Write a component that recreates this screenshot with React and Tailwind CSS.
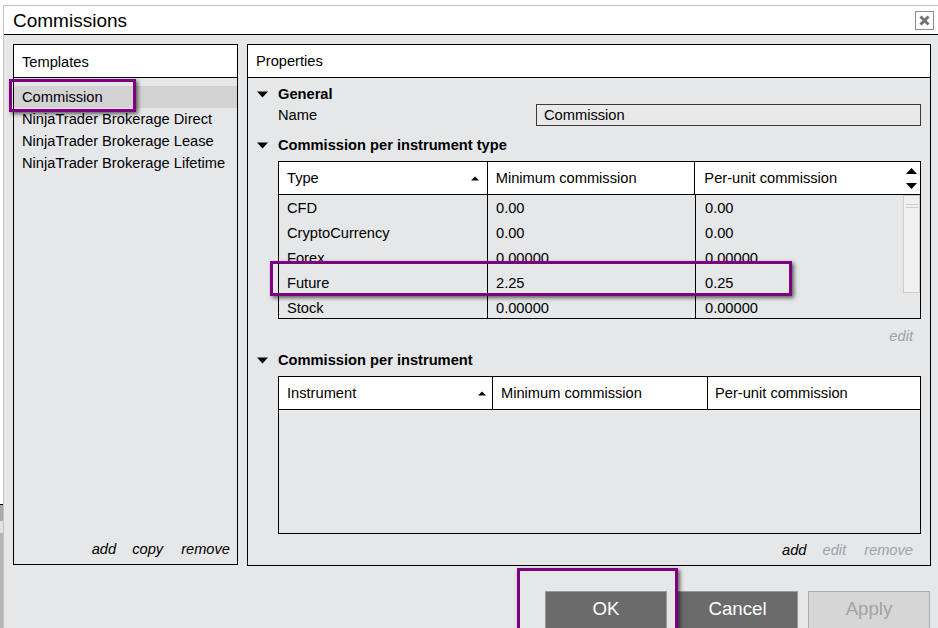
import React from "react";

const font = "font-['Liberation_Sans',Arial,sans-serif]";

const templates = [
  "Commission",
  "NinjaTrader Brokerage Direct",
  "NinjaTrader Brokerage Lease",
  "NinjaTrader Brokerage Lifetime",
];

const typeRows = [
  ["CFD", "0.00", "0.00"],
  ["CryptoCurrency", "0.00", "0.00"],
  ["Forex", "0.00000", "0.00000"],
  ["Future", "2.25", "0.25"],
  ["Stock", "0.00000", "0.00000"],
];

const Caret = () => (
  <svg width="11" height="7" viewBox="0 0 11 7" className="shrink-0">
    <path d="M0 0.5 L11 0.5 L5.5 6.5 Z" fill="#000" />
  </svg>
);

const SortUp = () => (
  <svg width="8" height="5" viewBox="0 0 8 5">
    <path d="M0 4.5 L8 4.5 L4 0.5 Z" fill="#000" />
  </svg>
);

const Section = ({ title }) => (
  <div className="flex items-center h-[20px] pl-[9px] gap-[10px]">
    <Caret />
    <span className="font-bold">{title}</span>
  </div>
);

const Highlight = ({ className }) => (
  <div
    className={`absolute border-[3px] border-[#7f007f] shadow-[2px_2px_4px_rgba(0,0,0,0.6)] pointer-events-none ${className}`}
  />
);

export default function App() {
  return (
    <div
      className={`relative w-[938px] h-[628px] overflow-hidden bg-white flex text-[14.67px] text-black ${font}`}
    >
      {/* window behind the dialog, peeking at the left edge */}
      <div className="w-[3px] flex flex-col">
        <div className="flex-1 bg-white" />
        <div className="h-[1px] bg-black" />
        <div className="h-[16px] bg-[#a9a9a9]" />
        <div className="h-[12px] bg-[#e2e2e2]" />
        <div className="h-[95px] bg-[#b5b5b5]" />
      </div>

      <div className="flex-1 flex flex-col pt-[5px]">
        <div className="flex-1 flex flex-col border-t border-l border-[#c4c4c4]">
          {/* title bar */}
          <div className="h-[29px] shrink-0 bg-white border-b border-black flex items-center justify-between pl-[9px] pr-[4px]">
            <span className="text-[19px] leading-none">Commissions</span>
            <div className="w-[19px] h-[19px] border border-[#8c8c8c] flex items-center justify-center">
              <svg width="11" height="11" viewBox="0 0 11 11">
                <path
                  d="M1.5 1.5 L9.5 9.5 M9.5 1.5 L1.5 9.5"
                  stroke="#747474"
                  strokeWidth="3"
                />
              </svg>
            </div>
          </div>

          {/* body */}
          <div className="flex-1 flex flex-col bg-[#e6e7e9] pl-[9px] pt-[9px]">
            <div className="flex gap-[9px] h-[522px]">
              {/* Templates */}
              <div className="w-[225px] h-[521px] border border-black flex flex-col">
                <div className="h-[33px] bg-white border-b border-black flex items-center pl-[8px] pt-[1px]">
                  Templates
                </div>
                <div className="pt-[8px] flex flex-col">
                  {templates.map((t, i) => (
                    <div
                      key={t}
                      className={`h-[22px] flex items-center pl-[8px] ${
                        i === 0 ? "bg-[#d3d3d3]" : ""
                      }`}
                    >
                      {t}
                    </div>
                  ))}
                </div>
                <div className="flex-1" />
                <div className="flex justify-end gap-[16px] pr-[7px] pb-[5px] h-[25px] items-center italic">
                  <span>add</span>
                  <span className="mr-[2px]">copy</span>
                  <span>remove</span>
                </div>
              </div>

              {/* Properties */}
              <div className="w-[684px] border border-black flex flex-col">
                <div className="h-[33px] bg-white border-b border-black flex items-center pl-[8px]">
                  Properties
                </div>
                <div className="flex flex-col pt-[6px]">
                  <Section title="General" />
                  <div className="flex items-center h-[22px] pl-[30px] pr-[9px]">
                    <span className="w-[258px]">Name</span>
                    <div className="flex-1 h-[22px] border border-[#3a3a3a] bg-[#e9e9e9] flex items-center pl-[7px]">
                      Commission
                    </div>
                  </div>
                  <div className="mt-[9px]">
                    <Section title="Commission per instrument type" />
                  </div>

                  {/* table 1 */}
                  <div className="mt-[6px] ml-[30px] mr-[9px] h-[158px] border border-black flex flex-col">
                    <div className="h-[33px] shrink-0 bg-white border-b border-black flex">
                      <div className="w-[209px] border-r border-black flex items-center justify-between pl-[8px] pr-[8px]">
                        <span>Type</span>
                        <SortUp />
                      </div>
                      <div className="w-[208px] border-r border-black flex items-center pl-[8px]">
                        Minimum commission
                      </div>
                      <div className="w-[207px] flex items-center pl-[9px]">
                        Per-unit commission
                      </div>
                      <div className="w-[18px] flex flex-col items-center justify-center gap-[9px] pl-[1px]">
                        <svg width="11" height="6" viewBox="0 0 11 6">
                          <path d="M0 6 L11 6 L5.5 0 Z" fill="#000" />
                        </svg>
                        <svg width="11" height="6" viewBox="0 0 11 6">
                          <path d="M0 0 L11 0 L5.5 6 Z" fill="#000" />
                        </svg>
                      </div>
                    </div>
                    <div className="flex-1 flex overflow-hidden">
                      <div className="flex flex-col">
                        {typeRows.map((r) => (
                          <div key={r[0]} className="flex h-[25px] shrink-0">
                            <div className="w-[209px] border-r border-black flex items-center pl-[8px]">
                              {r[0]}
                            </div>
                            <div className="w-[208px] border-r border-black flex items-center pl-[8px]">
                              {r[1]}
                            </div>
                            <div className="w-[207px] flex items-center pl-[9px]">
                              {r[2]}
                            </div>
                          </div>
                        ))}
                      </div>
                      <div className="w-[18px]">
                        <div className="h-[98px] bg-[#f0f0f0] border border-[#cdcdcd] flex flex-col items-center pt-[8px] gap-[2px]">
                          <div className="w-[12px] h-[1px] bg-[#cfcfcf]" />
                          <div className="w-[12px] h-[1px] bg-[#cfcfcf]" />
                        </div>
                      </div>
                    </div>
                  </div>

                  <div className="mt-[7px] h-[20px] flex items-center justify-end pr-[17px] italic text-[#9ba3ab]">
                    edit
                  </div>
                  <div className="mt-[4px]">
                    <Section title="Commission per instrument" />
                  </div>

                  {/* table 2 */}
                  <div className="mt-[6px] ml-[30px] mr-[9px] h-[158px] border border-black flex flex-col">
                    <div className="h-[33px] shrink-0 bg-white border-b border-black flex">
                      <div className="w-[214px] border-r border-black flex items-center justify-between pl-[8px] pr-[6px]">
                        <span>Instrument</span>
                        <SortUp />
                      </div>
                      <div className="w-[215px] border-r border-black flex items-center pl-[8px]">
                        Minimum commission
                      </div>
                      <div className="flex-1 flex items-center pl-[7px]">
                        Per-unit commission
                      </div>
                    </div>
                    <div className="flex-1" />
                  </div>

                  <div className="mt-[6px] h-[20px] flex items-center justify-end gap-[16px] pr-[17px] italic">
                    <span>add</span>
                    <span className="text-[#9ba3ab] mr-[2px]">edit</span>
                    <span className="text-[#9ba3ab]">remove</span>
                  </div>
                </div>
              </div>
            </div>

            {/* buttons */}
            <div className="mt-[25px] flex justify-end gap-[10px] pr-[8px] text-[18.67px]">
              <div className="w-[122px] h-[45px] bg-[#6b6b6b] border border-[#9a9a9a] text-white flex justify-center pt-[3px]">
                OK
              </div>
              <div className="w-[121px] h-[45px] bg-[#6b6b6b] border border-[#9a9a9a] text-white flex justify-center pt-[3px]">
                Cancel
              </div>
              <div className="w-[122px] h-[45px] bg-[#d6d6d6] border border-[#ababab] text-[#a3a3a3] flex justify-center pt-[3px]">
                Apply
              </div>
            </div>
          </div>
        </div>
      </div>

      <Highlight className="left-[9px] top-[79px] w-[127px] h-[33px]" />
      <Highlight className="left-[270px] top-[261px] w-[522px] h-[35px]" />
      <Highlight className="left-[517px] top-[568px] w-[161px] h-[70px]" />
    </div>
  );
}
